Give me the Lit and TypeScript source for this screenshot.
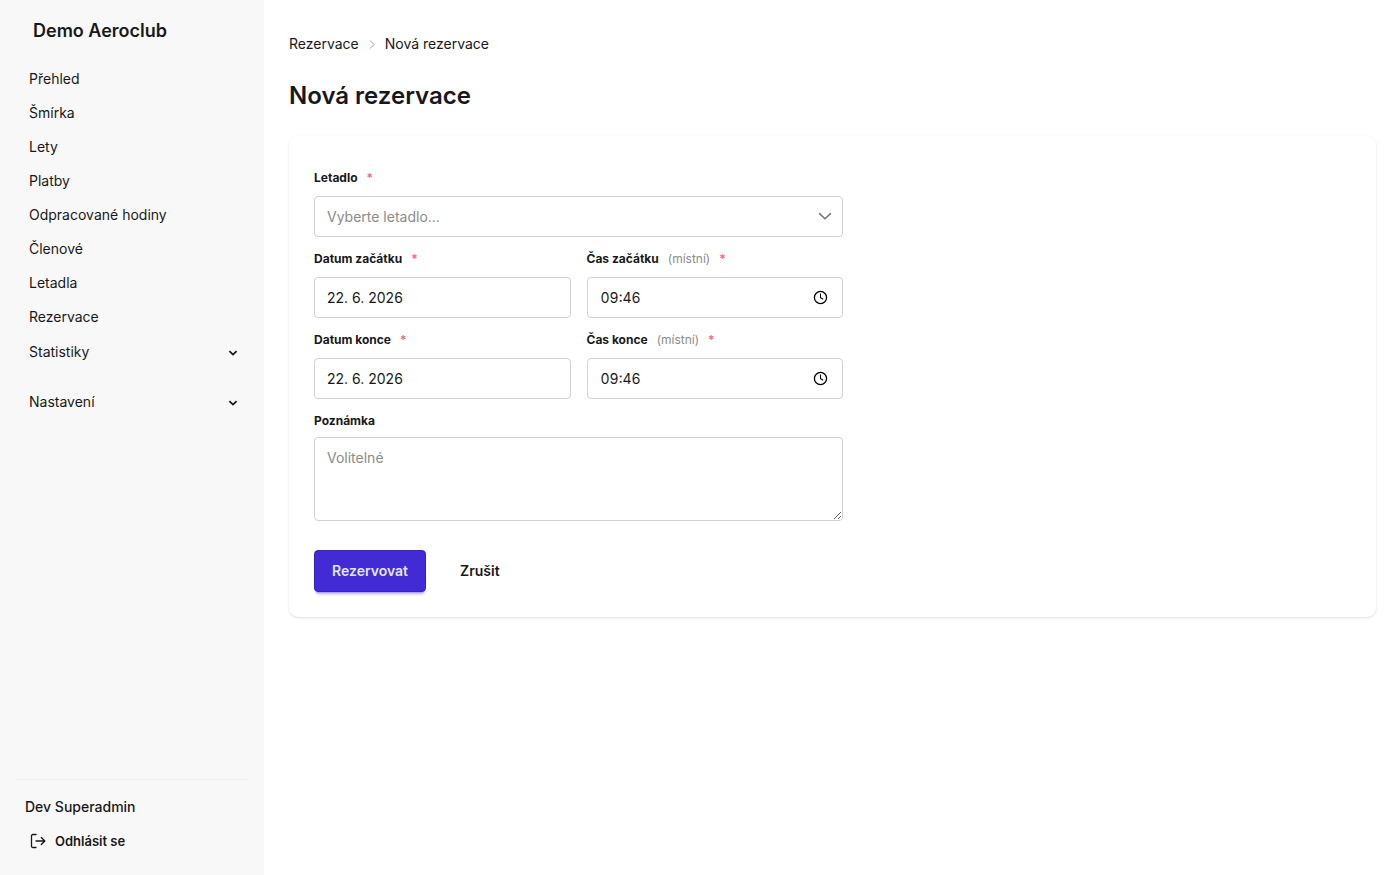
import { LitElement, html, css, nothing } from "lit";
import { customElement, property, state } from "lit/decorators.js";

const sharedStyles = css`
  *,
  *::before,
  *::after {
    box-sizing: border-box;
  }
  a {
    color: inherit;
    text-decoration: none;
  }
`;

interface NavItem {
  label: string;
  href: string;
}

@customElement("app-sidebar")
class AppSidebar extends LitElement {
  static styles = [
    sharedStyles,
    css`
      :host {
        display: flex;
        flex-direction: column;
        flex: none;
        width: 264px;
        min-height: 100vh;
        padding: 16px;
        background: #f8f8f8;
      }
      .brand {
        padding: 0 17px;
        font-size: 18px;
        line-height: 30px;
        font-weight: 600;
      }
      .menu {
        list-style: none;
        margin: 16px 0 0;
        padding: 0;
      }
      .item {
        display: block;
        padding: 7px 13px;
        line-height: 20px;
      }
      .group {
        margin-bottom: 14px;
      }
      .group summary {
        display: flex;
        align-items: center;
        justify-content: space-between;
        padding: 8px 9px 8px 13px;
        line-height: 20px;
        list-style: none;
        cursor: pointer;
      }
      .caret {
        width: 12px;
        height: 12px;
        margin-top: 2px;
      }
      .foot {
        margin-top: auto;
        padding: 15px 9px 4px;
        border-top: 1px solid #eee;
      }
      .user {
        font-weight: 500;
        line-height: 24px;
      }
      .logout {
        display: flex;
        align-items: center;
        gap: 9px;
        margin: 8px 0 0;
        padding: 4px 5px;
        border: 0;
        background: none;
        color: inherit;
        font: 600 13px/20px Inter, sans-serif;
        cursor: pointer;
      }
      .logout svg {
        width: 16px;
        height: 16px;
      }
    `,
  ];

  private items: NavItem[] = [
    { label: "Přehled", href: "#prehled" },
    { label: "Šmírka", href: "#smirka" },
    { label: "Lety", href: "#lety" },
    { label: "Platby", href: "#platby" },
    { label: "Odpracované hodiny", href: "#hodiny" },
    { label: "Členové", href: "#clenove" },
    { label: "Letadla", href: "#letadla" },
    { label: "Rezervace", href: "#rezervace" },
  ];

  private renderGroup(label: string) {
    return html`<li>
      <details class="group">
        <summary>
          ${label}
          <svg class="caret" viewBox="0 0 12 12" fill="none" stroke="currentColor" stroke-width="1.8" aria-hidden="true">
            <path d="M2.4 4.2 6 7.6 9.6 4.2" />
          </svg>
        </summary>
      </details>
    </li>`;
  }

  render() {
    return html`
      <a class="brand" href="#">Demo Aeroclub</a>
      <nav>
        <ul class="menu">
          ${this.items.map((i) => html`<li><a class="item" href=${i.href}>${i.label}</a></li>`)}
          ${this.renderGroup("Statistiky")} ${this.renderGroup("Nastavení")}
        </ul>
      </nav>
      <div class="foot">
        <div class="user">Dev Superadmin</div>
        <button class="logout" type="button">
          <svg viewBox="0 0 16 16" fill="none" stroke="currentColor" stroke-width="1.3" stroke-linecap="round" stroke-linejoin="round" aria-hidden="true">
            <path d="M6 1.5H2.8A1.3 1.3 0 0 0 1.5 2.8v10.4a1.3 1.3 0 0 0 1.3 1.3H6M6 8h8.7M11.3 4.5 14.8 8l-3.5 3.5" />
          </svg>
          Odhlásit se
        </button>
      </div>
    `;
  }
}

@customElement("form-label")
class FormLabel extends LitElement {
  @property() text = "";
  @property() hint = "";
  @property({ type: Boolean }) required = false;

  static styles = css`
    :host {
      display: flex;
      align-items: center;
      gap: 9px;
      font-size: 12px;
      line-height: 20px;
    }
    .text {
      font-weight: 700;
    }
    .hint {
      color: #8b8b8c;
    }
    .star {
      color: #ff637d;
      font-weight: 600;
    }
  `;

  render() {
    return html`
      <span class="text">${this.text}</span>
      ${this.hint ? html`<span class="hint">${this.hint}</span>` : nothing}
      ${this.required ? html`<span class="star">*</span>` : nothing}
    `;
  }
}

@customElement("reservation-form")
class ReservationForm extends LitElement {
  @state() private startDate = "22. 6. 2026";
  @state() private startTime = "09:46";
  @state() private endDate = "22. 6. 2026";
  @state() private endTime = "09:46";

  static styles = [
    sharedStyles,
    css`
      :host {
        display: block;
        max-width: 529px;
      }
      .form {
        display: grid;
        grid-template-columns: 1fr 1fr;
        gap: 12px 16px;
      }
      .wide {
        grid-column: 1 / -1;
      }
      .field {
        display: flex;
        flex-direction: column;
        gap: 8px;
      }
      .note {
        gap: 6px;
      }
      .box {
        position: relative;
        display: flex;
      }
      .control {
        display: block;
        width: 100%;
        height: 41px;
        margin: 0;
        padding: 0 12px;
        border: 1px solid #d1d1d1;
        border-radius: 4px;
        background: #fff;
        color: #18181b;
        font: 400 14px/20px Inter, sans-serif;
        appearance: none;
        outline: none;
      }
      .control:focus-visible {
        border-color: #422ad5;
      }
      .time {
        padding: 0 13px;
        font-variant-numeric: tabular-nums;
      }
      .select:invalid {
        color: #8b8b8c;
      }
      .area {
        height: 84px;
        padding: 10px 12px;
        resize: vertical;
      }
      .area::placeholder {
        color: #8b8b8c;
      }
      .icon {
        position: absolute;
        right: 14px;
        top: 12px;
        width: 16px;
        height: 16px;
        pointer-events: none;
      }
      .chevron {
        right: 10px;
        color: #757576;
      }
      .actions {
        display: flex;
        gap: 16px;
        padding-top: 17px;
      }
      .btn {
        height: 42px;
        padding: 0 17px;
        border: 1px solid transparent;
        border-radius: 4px;
        background: none;
        color: #18181b;
        font: 600 14px/20px Inter, sans-serif;
        cursor: pointer;
      }
      .primary {
        border-color: #3a22c4;
        background: #422ad5;
        color: #e0e7ff;
        box-shadow: 0 3px 2px -2px rgba(66, 42, 213, 0.3), 0 4px 3px -2px rgba(66, 42, 213, 0.3);
      }
    `,
  ];

  private renderDate(id: string, label: string, value: string) {
    return html`<label class="field" for=${id}>
      <form-label text=${label} required></form-label>
      <input class="control" id=${id} type="text" .value=${value} required />
    </label>`;
  }

  private renderTime(id: string, label: string, value: string) {
    return html`<label class="field" for=${id}>
      <form-label text=${label} hint="(místní)" required></form-label>
      <span class="box">
        <input class="control time" id=${id} type="text" inputmode="numeric" .value=${value} required />
        <svg class="icon" viewBox="0 0 16 16" fill="none" stroke="#000" stroke-width="1.3" aria-hidden="true">
          <circle cx="7.5" cy="8.5" r="6.1" />
          <path d="M7.5 4.6V8.6L10.2 10.2" stroke-width="1.1" />
        </svg>
      </span>
    </label>`;
  }

  render() {
    return html`
      <form class="form" @submit=${(e: Event) => e.preventDefault()}>
        <label class="field wide" for="aircraft">
          <form-label text="Letadlo" required></form-label>
          <span class="box">
            <select class="control select" id="aircraft" required>
              <option value="" selected>Vyberte letadlo...</option>
            </select>
            <svg class="icon chevron" viewBox="0 0 16 16" fill="none" stroke="currentColor" stroke-width="1.5" stroke-linecap="round" stroke-linejoin="round" aria-hidden="true">
              <path d="M2.5 5.6 8 10.8l5.5-5.2" />
            </svg>
          </span>
        </label>
        ${this.renderDate("start-date", "Datum začátku", this.startDate)}
        ${this.renderTime("start-time", "Čas začátku", this.startTime)}
        ${this.renderDate("end-date", "Datum konce", this.endDate)}
        ${this.renderTime("end-time", "Čas konce", this.endTime)}
        <label class="field note wide" for="note">
          <form-label text="Poznámka"></form-label>
          <textarea class="control area" id="note" placeholder="Volitelné"></textarea>
        </label>
        <div class="actions wide">
          <button class="btn primary" type="submit">Rezervovat</button>
          <button class="btn" type="button">Zrušit</button>
        </div>
      </form>
    `;
  }
}

@customElement("app-root")
class AppRoot extends LitElement {
  static styles = [
    sharedStyles,
    css`
      :host {
        display: flex;
        min-height: 100vh;
        background: #fff;
        color: #18181b;
        font: 400 14px/20px Inter, sans-serif;
      }
      .main {
        flex: 1;
        min-width: 0;
        padding: 34px 24px 24px 25px;
      }
      .crumbs {
        display: flex;
        align-items: center;
        gap: 8px;
      }
      .sep {
        width: 10px;
        height: 11px;
        color: #9a9a9b;
      }
      .title {
        margin: 25px 0 23px;
        font-size: 24px;
        line-height: 34px;
        font-weight: 600;
      }
      .card {
        padding: 32px 25px 25px;
        border-radius: 9px;
        background: #fff;
        box-shadow: 0 1px 3px rgba(0, 0, 0, 0.1), 0 1px 2px -1px rgba(0, 0, 0, 0.1);
      }
    `,
  ];

  render() {
    return html`
      <app-sidebar></app-sidebar>
      <main class="main">
        <nav class="crumbs">
          <a href="#rezervace">Rezervace</a>
          <svg class="sep" viewBox="0 0 10 11" fill="none" stroke="currentColor" aria-hidden="true">
            <path d="M3 1.5 7 5.5l-4 4" />
          </svg>
          <span>Nová rezervace</span>
        </nav>
        <h1 class="title">Nová rezervace</h1>
        <section class="card">
          <reservation-form></reservation-form>
        </section>
      </main>
    `;
  }
}
